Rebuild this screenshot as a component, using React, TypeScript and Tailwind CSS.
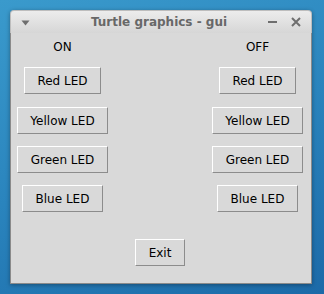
import React from "react";

function Btn({ children }: { children: React.ReactNode }) {
  return (
    <div className="h-[27px] px-[12.5px] flex items-center justify-center bg-[#d9d9d9] border border-t-white border-l-white border-r-[#8c8c8c] border-b-[#8c8c8c] text-[12px] leading-none text-black whitespace-nowrap">
      {children}
    </div>
  );
}

function Column({ label, className }: { label: string; className: string }) {
  return (
    <div className={`flex flex-col items-center ${className}`}>
      <div className="h-[19px] mt-[4px] flex items-center text-[12px] text-black">{label}</div>
      <div className="mt-[11px]">
        <Btn>Red LED</Btn>
      </div>
      <div className="mt-[13px]">
        <Btn>Yellow LED</Btn>
      </div>
      <div className="mt-[12px]">
        <Btn>Green LED</Btn>
      </div>
      <div className="mt-[12px]">
        <Btn>Blue LED</Btn>
      </div>
    </div>
  );
}

export default function App() {
  return (
    <div
      className="w-[324px] h-[294px] pt-[10px] pl-[10px] bg-[linear-gradient(160deg,#3a9acc_0%,#2a84bd_50%,#1c6aa8_100%)] overflow-hidden"
      style={{ fontFamily: '"DejaVu Sans", sans-serif' }}
    >
      <div className="w-[302px] h-[274px] flex flex-col shadow-[0_1px_4px_rgba(0,0,0,0.35)] rounded-t-[4px]">
        <div className="h-[23px] rounded-t-[4px] bg-[linear-gradient(#ececec,#d6d6d6)] border border-b-0 border-[#bdbdbd] flex items-center px-[10px]">
          <svg width="9" height="6" viewBox="0 0 9 6" className="shrink-0 mt-[1px]">
            <path d="M0.5 0.5 H8.5 L4.5 5.5 Z" fill="#6e6e6e" />
          </svg>
          <div className="flex-1 text-center text-[12px] font-bold text-[#686868] pl-[24px]">Turtle graphics - gui</div>
          <div className="flex items-center gap-[14px] pl-[4px]">
            <div className="w-[9px] h-[2px] bg-[#6e6e6e]" />
            <svg width="10" height="10" viewBox="0 0 10 10">
              <path d="M1 1 L9 9 M9 1 L1 9" stroke="#6e6e6e" strokeWidth="2" />
            </svg>
          </div>
        </div>
        <div className="flex-1 bg-[#d9d9d9] border-l border-r border-b border-[#8a8a8a] flex flex-col">
          <div className="flex justify-between">
            <Column label="ON" className="w-[103px]" />
            <Column label="OFF" className="w-[107px]" />
          </div>
          <div className="flex justify-center mt-[27px] pr-[2px]">
            <Btn>Exit</Btn>
          </div>
        </div>
      </div>
    </div>
  );
}
